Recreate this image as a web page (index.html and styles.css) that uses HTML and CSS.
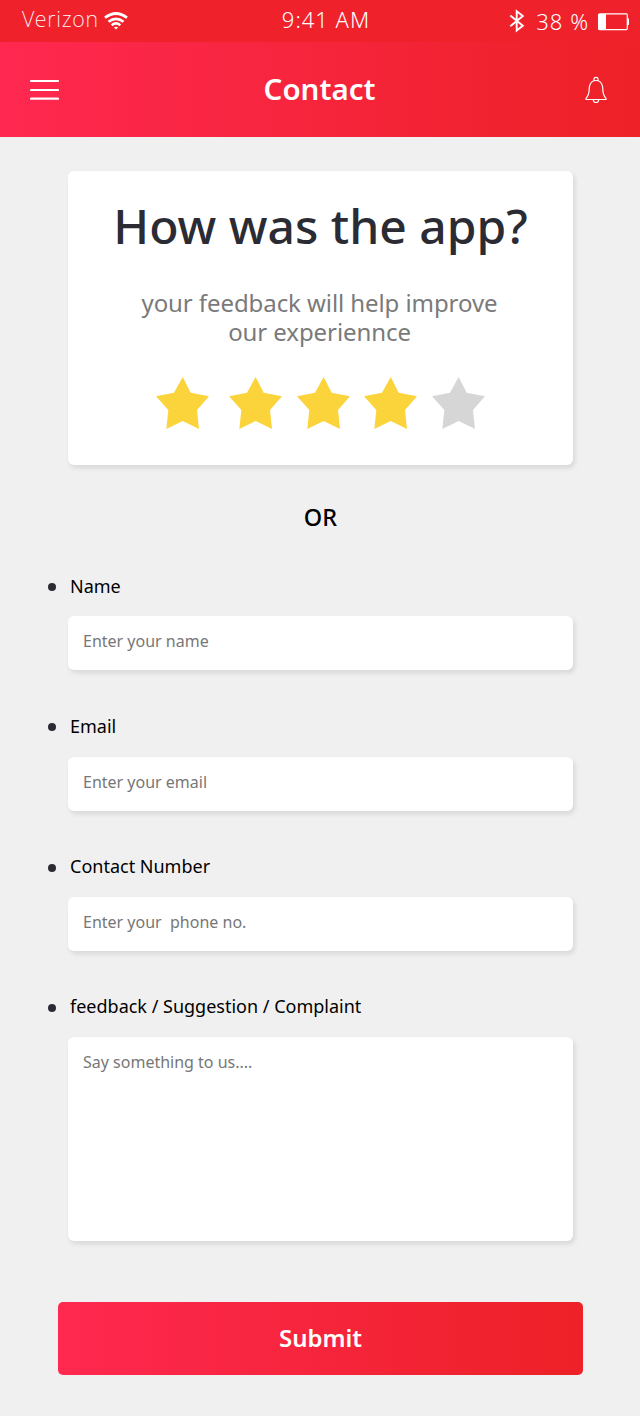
FILE: index.html
```html
<!DOCTYPE html>
<html lang="en">
<head>
<meta charset="utf-8">
<title>Contact</title>
<link rel="stylesheet" href="styles.css">
</head>
<body>
<div class="status">
  <div class="carrier">
    <span class="carrier-name">Verizon</span>
    <svg class="wifi" viewBox="0 0 24 18" fill="none" stroke="#fff" stroke-width="2.7">
      <path d="M1 5.8Q12-2.8 23 5.8M4.5 9.7Q12 3.9 19.500 9.700M7.700 13.200Q12 9.700 16.300 13.200"/>
      <path d="M12 17.500L9.900 15.400Q12 13.900 14.100 15.400Z" fill="#fff" stroke="none"/>
    </svg>
  </div>
  <span class="clock">9:41 AM</span>
  <div class="power">
    <svg class="bluetooth" viewBox="0 0 16 24" fill="none" stroke="#fff" stroke-width="1.9"><path d="M1.300 6.600L13.800 16.800L7.700 21.500V2.300L13.800 7L1.300 17.300"/></svg>
    <span class="percent">38 %</span>
    <svg class="battery" viewBox="0 0 32 18"><rect x=".7" y=".9" width="28.600" height="15.700" rx="1" fill="none" stroke="#fff" stroke-width="1.200"/><path d="M0 1h8v15.500H0zM29.500 5.500h1.500v6.500h-1.500z" fill="#fff"/></svg>
  </div>
</div>
<header class="header">
  <svg class="menu" viewBox="0 0 29 22" stroke="#fff" stroke-width="2.200" stroke-linecap="round"><path d="M1 2h27M1 11h27M1 19.700h27"/></svg>
  <h1 class="title">Contact</h1>
  <svg class="bell" viewBox="0 0 22 28" fill="none" stroke="#fff" stroke-width="1.200" stroke-linejoin="round"><path d="M1 23.500V22.300C5.500 17.500 3.500 14 4.600 9.800Q6 4.500 11 4.500T17.400 9.800C18.500 14 16.500 17.500 21 22.300V23.500ZM8.300 23.700Q8.500 26.500 11 26.500T13.700 23.700M9 4.600Q8.500 1.300 11 1.300T13 4.600"/></svg>
</header>
<main class="page">
  <section class="card">
    <h2 class="question">How was the app?</h2>
    <div class="hint"><p>your feedback will help improve</p><p>our experiennce</p></div>
    <div class="stars">
      <svg class="star" viewBox="0 0 159 156"><path d="M80 0l24 47 55 11-36 41 6 57-49-24-49 24 6-57L0 58l54-11z"/></svg>
      <svg class="star star-wide" viewBox="0 0 159 156"><path d="M80 0l24 47 55 11-36 41 6 57-49-24-49 24 6-57L0 58l54-11z"/></svg>
      <svg class="star" viewBox="0 0 159 156"><path d="M80 0l24 47 55 11-36 41 6 57-49-24-49 24 6-57L0 58l54-11z"/></svg>
      <svg class="star star-tight" viewBox="0 0 159 156"><path d="M80 0l24 47 55 11-36 41 6 57-49-24-49 24 6-57L0 58l54-11z"/></svg>
      <svg class="star star-off" viewBox="0 0 159 156"><path d="M80 0l24 47 55 11-36 41 6 57-49-24-49 24 6-57L0 58l54-11z"/></svg>
    </div>
  </section>
  <p class="or">OR</p>
  <form class="form">
    <div class="field"><label class="label" for="name">Name</label><input class="input" id="name" placeholder="Enter your name"></div>
    <div class="field"><label class="label" for="email">Email</label><input class="input" id="email" placeholder="Enter your email"></div>
    <div class="field"><label class="label" for="phone">Contact Number</label><input class="input" id="phone" placeholder="Enter your  phone no."></div>
    <div class="field"><label class="label" for="message">feedback / Suggestion / Complaint</label><textarea class="input message" id="message" placeholder="Say something to us...."></textarea></div>
    <button class="submit" type="button">Submit</button>
  </form>
</main>
</body>
</html>
```
FILE: styles.css
```css
* { box-sizing: border-box; margin: 0; }
body { background: #f0f0f0; font-family: "Noto Sans", "Open Sans", sans-serif; color: #000; }
svg { display: block; flex: none; }
.status { height: 42px; padding: 0 10px 0 22px; background: #ef222c; color: #fff; display: grid; grid-template-columns: 1fr auto 1fr; font-size: 22px; font-weight: 350; line-height: 30px; letter-spacing: 1px; white-space: nowrap; }
.carrier { display: flex; align-items: flex-start; padding-top: 4px; }
.carrier-name { font-size: 21.500px; font-weight: 200; width: 82px; letter-spacing: .8px; }
.wifi { width: 24px; height: 18px; margin-top: 8px; }
.clock { padding-top: 4px; }
.power { display: flex; justify-content: flex-end; padding-top: 6px; }
.bluetooth { width: 16px; height: 24px; margin: 3px 11px 0 0; }
.percent { margin-right: 9px; }
.battery { width: 32px; height: 18px; margin-top: 7px; }
.header { height: 95px; padding: 0 33px 0 30px; display: grid; grid-template-columns: 1fr auto 1fr; align-items: center; background: linear-gradient(90deg, #ff2850, #ed2127); color: #fff; }
.menu { width: 29px; height: 22px; }
.title { position: relative; top: -1px; left: 1px; font-size: 29.500px; font-weight: 600; line-height: 40px; }
.bell { width: 22px; height: 28px; justify-self: end; }
.page { padding: 34px 57px 41px 58px; }
.card { height: 294px; margin: 0 10px; padding-top: 22px; border-radius: 6px; background: #fff; box-shadow: 2px 3px 5px rgba(0,0,0,.1); text-align: center; white-space: nowrap; }
.question { font-size: 48px; font-weight: 500; line-height: 66px; color: #2b2b34; }
.hint { margin: 29px 2px 0 0; font-size: 24px; letter-spacing: -.08px; line-height: 29px; color: #7a7a7a; }
.stars { display: flex; gap: 15px; padding: 31px 0 0 88px; }
.star { width: 53px; height: 52px; fill: #fbd33b; }
.star-wide { margin-left: 5px; }
.star-tight { margin-left: -1px; }
.star-off { fill: #d6d6d6; }
.or { margin-top: 36px; text-align: center; font-size: 23.500px; font-weight: 500; line-height: 32px; }
.form { display: flex; flex-direction: column; margin-top: 39.600px; }
.field { display: flex; flex-direction: column; margin: 0 10px 42.450px; }
.label { display: flex; align-items: center; gap: 14px; margin-left: -20px; font-size: 18px; line-height: 26px; }
.label::before { content: ""; width: 8px; height: 8px; margin-top: 3px; border-radius: 50%; background: #2b2b34; }
.input { height: 54px; margin-top: 17.800px; padding: 0 15px 4px; border: 0; border-radius: 6px; background: #fff; box-shadow: 2px 3px 5px rgba(0,0,0,.1); font: 400 16px/24px "Noto Sans", sans-serif; resize: none; }
.input::placeholder { color: #777; opacity: 1; }
.message { height: 204px; padding-top: 13px; }
.submit { height: 73px; padding-bottom: 2px; margin-top: 18.400px; border: 0; border-radius: 5px; background: linear-gradient(90deg, #ff2850, #ed2127); color: #fff; font: 600 24px/34px "Noto Sans", sans-serif; }
```
